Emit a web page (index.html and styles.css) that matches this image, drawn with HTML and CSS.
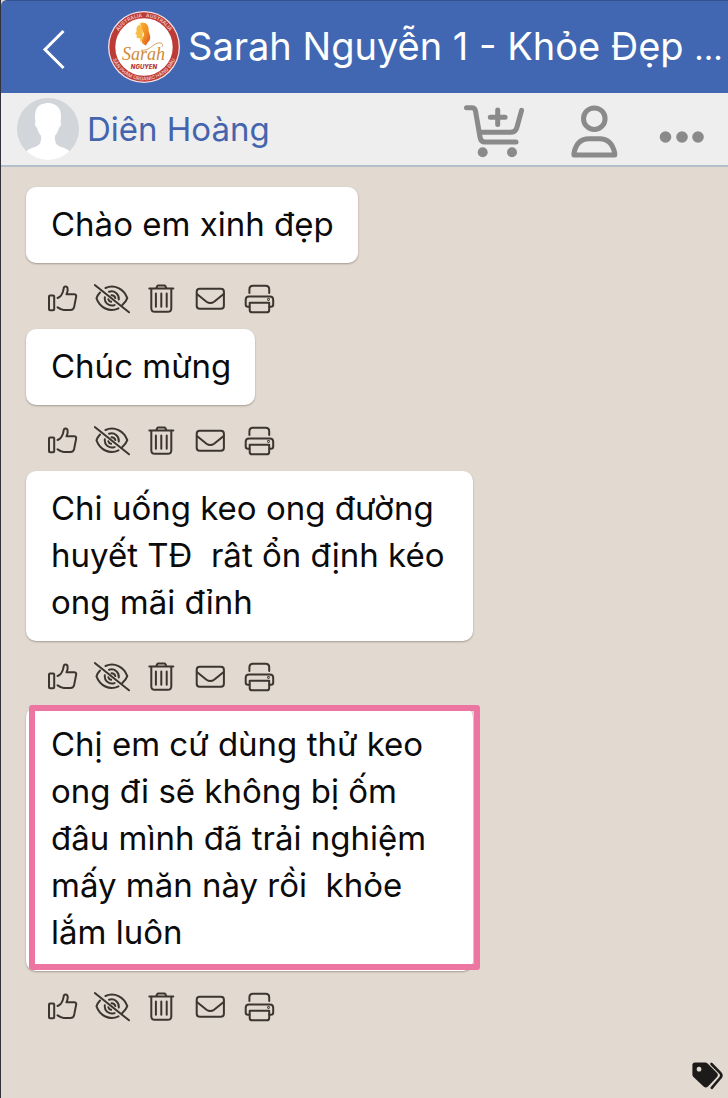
FILE: index.html
```html
<!DOCTYPE html>
<html lang="vi">
<head>
<meta charset="utf-8">
<meta name="viewport" content="width=device-width, initial-scale=1">
<title>Diên Hoàng</title>
<link rel="stylesheet" href="styles.css">
</head>
<body>
<svg class="sprite" aria-hidden="true">
  <symbol id="like" viewBox="0 0 36 36">
    <rect x="4" y="14.500" width="5.200" height="14.800" rx="1"/>
    <path d="M12.500 17c2.700-1 4.500-3.500 5.400-6.300l1-4.200c.4-1.500 3-1.200 3.600.4.600 2-.1 4.400-1 6.400h7.500c1.800 0 2.500.9 2.100 2.600l-2 10.200c-.4 1.900-1.600 2.900-3.600 2.900h-6.800c-2.400 0-4.200-1.300-6.200-2.700"/>
  </symbol>
  <symbol id="hide" viewBox="0 0 36 36">
    <path d="M.8 4 35 31.300"/>
    <path d="M11.500 7c9-4 18.500 1 21.800 10.200-1 2.800-2.900 5-5 6.800M6 11.500c-1.700 1.700-2.800 3.700-3.500 5.900 3.300 9.300 13 14.300 22 10"/>
    <path d="M15 10.800c5.500-1.700 10.300 2.200 9.800 7.700M10.800 16.300c-.5 5.600 4.500 9.600 9.800 7.800M17.500 14.200c2 0 3.400 1.100 3.800 2.900M14.300 18.300c.4 1.400 1.400 2.300 2.800 2.500"/>
  </symbol>
  <symbol id="trash" viewBox="0 0 36 36">
    <path d="M6.300 7.500h24M13 7.500l1.200-2.300q.3-.6 1-.6h6.200q.7 0 1 .6l1.200 2.300M8.300 7.500v19.700q0 3.600 3.600 3.600h12.800q3.600 0 3.600-3.600V7.500M12.900 12.500v13.200M18.300 12.500v13.200M23.700 12.500v13.200"/>
  </symbol>
  <symbol id="mail" viewBox="0 0 36 36">
    <rect x="4.700" y="7.700" width="27.200" height="20" rx="3"/>
    <path d="m4.900 13 9.600 7.700q3.800 2.700 7.600 0l9.600-7.700"/>
  </symbol>
  <symbol id="print" viewBox="0 0 36 36">
    <path d="M8.400 12V8.200q0-3.500 3.500-3.500h12.800q3.500 0 3.500 3.500V12M8.400 25.800H7q-2.300 0-2.300-2.300v-4.700q0-3.400 3.400-3.400h20.700q3.400 0 3.400 3.400v4.700q0 2.300-2.300 2.300h-1.500"/>
    <path d="M8.700 21.700h19.500v7.200q0 2.400-2.400 2.400H11.100q-2.400 0-2.400-2.400Z"/>
    <circle cx="27.500" cy="18.500" r=".4"/>
  </symbol>
</svg>

<header class="topbar">
  <button class="plain back" type="button" aria-label="Quay lại">
    <svg width="24" height="42" viewBox="0 0 24 42"><path d="M21.500 3 3 21.500 21.500 40"/></svg>
  </button>
  <svg class="logo" width="72" height="72" viewBox="0 0 72 72" role="img" aria-label="Sarah Nguyen">
    <defs>
      <linearGradient id="gold" x1="0" y1="0" x2="1" y2="1">
        <stop offset="0" stop-color="#f9b52c"/><stop offset=".55" stop-color="#f08a24"/><stop offset="1" stop-color="#d9481f"/>
      </linearGradient>
      <path id="arc-top" d="M6 36a30 30 0 0 1 60 0"/>
      <path id="arc-bottom" d="M2.500 36a33.500 33.500 0 0 0 67 0"/>
    </defs>
    <circle cx="36" cy="36" r="36" fill="#f3e3e6"/>
    <circle cx="36" cy="36" r="31.700" fill="#fff" stroke="#bd3b36" stroke-width="6"/>
    <g class="ring-text">
      <text><textPath href="#arc-top" startOffset="50%">AUSTRALIA &#160; AUSTRALIA</textPath></text>
      <text><textPath href="#arc-bottom" startOffset="50%">SẢN PHẨM ORGANIC HÀNG ĐẦU</textPath></text>
    </g>
    <path fill="url(#gold)" d="M32 12c5-2 9 2 8.600 6.500-.2 3.500 2 5 1.600 8.500-.3 3.800-3.600 4.600-4 7.500-2.500-.8-4.500-2.300-4.700-4.500-.3-2.600 2.700-4 2.400-7-.2-2.400-2.600-3.200-2.800-6-.1-1.900.4-3.200-1.100-5Z"/>
    <path fill="#f9bd45" d="M32.500 13c-3.400 1.500-4.600 4.500-3.800 7l-1.500 3 1.500.7v3.300l3.400.3.400 3.700 3-4c-2.500-2.500.6-4.500-1.500-7.500-1.500-2-1-4.500-1.500-6.500Z"/>
    <path fill="none" stroke="#dba060" stroke-width="1" d="M33 39c7 2 12-6 17-7 4-.8 6 2 3.500 4"/>
    <text class="logo-name" x="35.500" y="49">Sarah</text>
    <text class="logo-sub" x="36" y="58">NGUYEN</text>
  </svg>
  <h1 class="title">Sarah Nguyễn 1 - Khỏe Đẹp <span class="cut">...</span></h1>
</header>

<section class="contact">
  <svg class="avatar" width="62" height="62" viewBox="0 0 62 62" role="img" aria-label="Ảnh đại diện">
    <clipPath id="round"><circle cx="31" cy="31" r="31"/></clipPath>
    <g clip-path="url(#round)">
      <path fill="#d2d5da" d="M0 0h62v62H0z"/>
      <path fill="#fff" d="M31 5c8 0 13 5 13 13 0 3-.2 5-.5 6 1.300 1.300.4 4.400-1.500 5.800-.8 3.500-2.300 6-4 8-.4 6.700 1 9.200 5 10.700 6 2.200 9.500 3.800 12 7V66H7V55.500c2.500-3.200 6-4.800 12-7 4-1.500 5.400-4 5-10.700-1.700-2-3.200-4.500-4-8-1.900-1.400-2.800-4.500-1.500-5.800-.3-1-.5-3-.5-6 0-7 4-12 9-12.200C28 5.200 29 5 31 5Z"/>
    </g>
  </svg>
  <h2 class="name">Diên Hoàng</h2>
  <nav class="tools">
    <button class="plain" type="button" aria-label="Tạo đơn hàng">
      <svg width="60" height="54" viewBox="0 0 60 54">
        <path d="M2.500 3.700h5.200q3.200 0 3.800 3.300l4.500 26q.8 5 5 5h31M16 28.300h30.500q5 0 6.300-4.500l4.800-17.500M33.700 6v14.500M26.300 13.200h14.800"/>
        <g class="solid"><circle cx="18.700" cy="48.300" r="5"/><circle cx="48" cy="48.300" r="5"/></g>
      </svg>
    </button>
    <button class="plain person" type="button" aria-label="Khách hàng">
      <svg width="48" height="54" viewBox="0 0 48 54">
        <circle cx="24.300" cy="14.700" r="10.800"/>
        <path d="M4 51v-2Q7 34.800 19 34.800h10.500q12 0 15.200 14.200v2Z"/>
      </svg>
    </button>
    <button class="plain more" type="button" aria-label="Thêm">
      <svg width="46" height="54" viewBox="0 0 46 54">
        <g class="solid"><circle cx="6.500" cy="33" r="5.800"/><circle cx="23" cy="33" r="5.800"/><circle cx="39" cy="33" r="5.800"/></g>
      </svg>
    </button>
  </nav>
</section>

<main class="chat">
  <article class="message">
    <p class="bubble">Chào em xinh đẹp</p>
    <div class="actions">
      <button class="plain" type="button" aria-label="Thích"><svg><use href="#like"/></svg></button>
      <button class="plain" type="button" aria-label="Ẩn"><svg><use href="#hide"/></svg></button>
      <button class="plain" type="button" aria-label="Xóa"><svg><use href="#trash"/></svg></button>
      <button class="plain" type="button" aria-label="Nhắn tin"><svg><use href="#mail"/></svg></button>
      <button class="plain" type="button" aria-label="In"><svg><use href="#print"/></svg></button>
    </div>
  </article>
  <article class="message">
    <p class="bubble">Chúc mừng</p>
    <div class="actions">
      <button class="plain" type="button" aria-label="Thích"><svg><use href="#like"/></svg></button>
      <button class="plain" type="button" aria-label="Ẩn"><svg><use href="#hide"/></svg></button>
      <button class="plain" type="button" aria-label="Xóa"><svg><use href="#trash"/></svg></button>
      <button class="plain" type="button" aria-label="Nhắn tin"><svg><use href="#mail"/></svg></button>
      <button class="plain" type="button" aria-label="In"><svg><use href="#print"/></svg></button>
    </div>
  </article>
  <article class="message">
    <p class="bubble">Chi uống keo ong đường huyết TĐ&nbsp; rât ổn định kéo ong mãi đỉnh</p>
    <div class="actions">
      <button class="plain" type="button" aria-label="Thích"><svg><use href="#like"/></svg></button>
      <button class="plain" type="button" aria-label="Ẩn"><svg><use href="#hide"/></svg></button>
      <button class="plain" type="button" aria-label="Xóa"><svg><use href="#trash"/></svg></button>
      <button class="plain" type="button" aria-label="Nhắn tin"><svg><use href="#mail"/></svg></button>
      <button class="plain" type="button" aria-label="In"><svg><use href="#print"/></svg></button>
    </div>
  </article>
  <article class="message">
    <p class="bubble marked">Chị em cứ dùng thử keo ong đi sẽ không bị ốm đâu mình đã trải nghiệm mấy măn này rồi&nbsp; khỏe lắm luôn</p>
    <div class="actions">
      <button class="plain" type="button" aria-label="Thích"><svg><use href="#like"/></svg></button>
      <button class="plain" type="button" aria-label="Ẩn"><svg><use href="#hide"/></svg></button>
      <button class="plain" type="button" aria-label="Xóa"><svg><use href="#trash"/></svg></button>
      <button class="plain" type="button" aria-label="Nhắn tin"><svg><use href="#mail"/></svg></button>
      <button class="plain" type="button" aria-label="In"><svg><use href="#print"/></svg></button>
    </div>
  </article>
</main>

<button class="plain tags" type="button" aria-label="Nhãn">
  <svg width="32" height="28" viewBox="0 0 32 28">
    <path fill="#1d1b1a" fill-rule="evenodd" d="M3 .5h10q1.500 0 2.600 1.100l9.200 9.200q2.200 2.200 0 4.400l-8.800 9.300q-2.200 2.200-4.400 0L1.500 15Q.4 14 .4 12.500V3Q.4.500 3 .5Zm4 4.300a2.400 2.400 0 1 0 .1 0Z"/>
    <path fill="none" stroke="#1d1b1a" stroke-width="2.600" stroke-linecap="round" d="m19.500 2 8.700 8.800q2.400 2.600 0 5.200l-8.400 9.800"/>
  </svg>
</button>
</body>
</html>
```
FILE: styles.css
```css
* {
  box-sizing: border-box;
}

body {
  margin: 0;
  min-height: 100vh;
  border-left: 1px solid #30323c;
  background: #e2d9d0;
  color: #0b0b0b;
  font-family: Inter, "Noto Sans", sans-serif;
}

.sprite {
  display: none;
}

svg {
  display: block;
  flex: none;
}

.plain {
  display: flex;
  align-items: center;
  justify-content: center;
  padding: 0;
  border: 0;
  background: none;
  color: inherit;
}

.topbar {
  display: flex;
  align-items: center;
  height: 93px;
  padding-left: 41px;
  border-top: 1px solid #34528f;
  border-radius: 6px 0 0 0;
  background: #4167b2;
  color: #fff;
}

.back {
  margin: 4px 42px 0 0;
}

.back path {
  fill: none;
  stroke: #fff;
  stroke-width: 3;
}

.title {
  flex: 1;
  min-width: 0;
  margin: 0 0 0 8px;
  overflow: hidden;
  font-size: 38px;
  font-weight: 400;
  line-height: 60px;
  white-space: nowrap;
}

.cut {
  font-size: 33px;
}

.ring-text {
  fill: #f0c4bf;
  font-size: 5px;
  font-weight: 600;
  text-anchor: middle;
}

.logo-name {
  fill: #d08a3c;
  font-family: "Liberation Serif", serif;
  font-size: 18px;
  font-style: italic;
  text-anchor: middle;
}

.logo-sub {
  fill: #b5342d;
  font-size: 6px;
  font-style: italic;
  font-weight: 800;
  text-anchor: middle;
}

.contact {
  display: flex;
  align-items: center;
  height: 74px;
  padding: 0 23px 0 16px;
  border-bottom: 2px solid #b4bfcb;
  background: #eee;
}

.name {
  margin: 0 0 0 8px;
  color: #4464ae;
  font-size: 33px;
  font-weight: 400;
  line-height: 48px;
}

.tools {
  display: flex;
  margin-left: auto;
  padding-top: 4px;
}

.tools svg {
  fill: none;
  stroke: #8a8a8a;
  stroke-width: 5;
  stroke-linecap: round;
  stroke-linejoin: round;
}

.tools .solid {
  fill: #8a8a8a;
  stroke: none;
}

.person {
  margin: 0 41px 0 46px;
}

.chat {
  padding: 20px 25px 40px;
}

.bubble {
  position: relative;
  width: fit-content;
  max-width: 447px;
  margin: 0;
  padding: 14px 24px 15px 25px;
  border-radius: 10px;
  background: #fff;
  box-shadow: 0 1px 2px #a39b93;
  font-size: 33px;
  line-height: 47px;
}

.marked::after {
  content: "";
  position: absolute;
  inset: -2px -7px 1px 3px;
  border: 6px solid #ec75a2;
  border-radius: 3px;
}

.actions {
  display: flex;
  height: 66px;
  padding: 5px 0 0 12px;
}

.actions .plain {
  width: 49px;
}

.actions svg {
  width: 36px;
  height: 36px;
  fill: none;
  stroke: #3d3530;
  stroke-width: 2;
  stroke-linecap: round;
  stroke-linejoin: round;
}

.tags {
  position: fixed;
  right: 4px;
  bottom: 8px;
}
```
